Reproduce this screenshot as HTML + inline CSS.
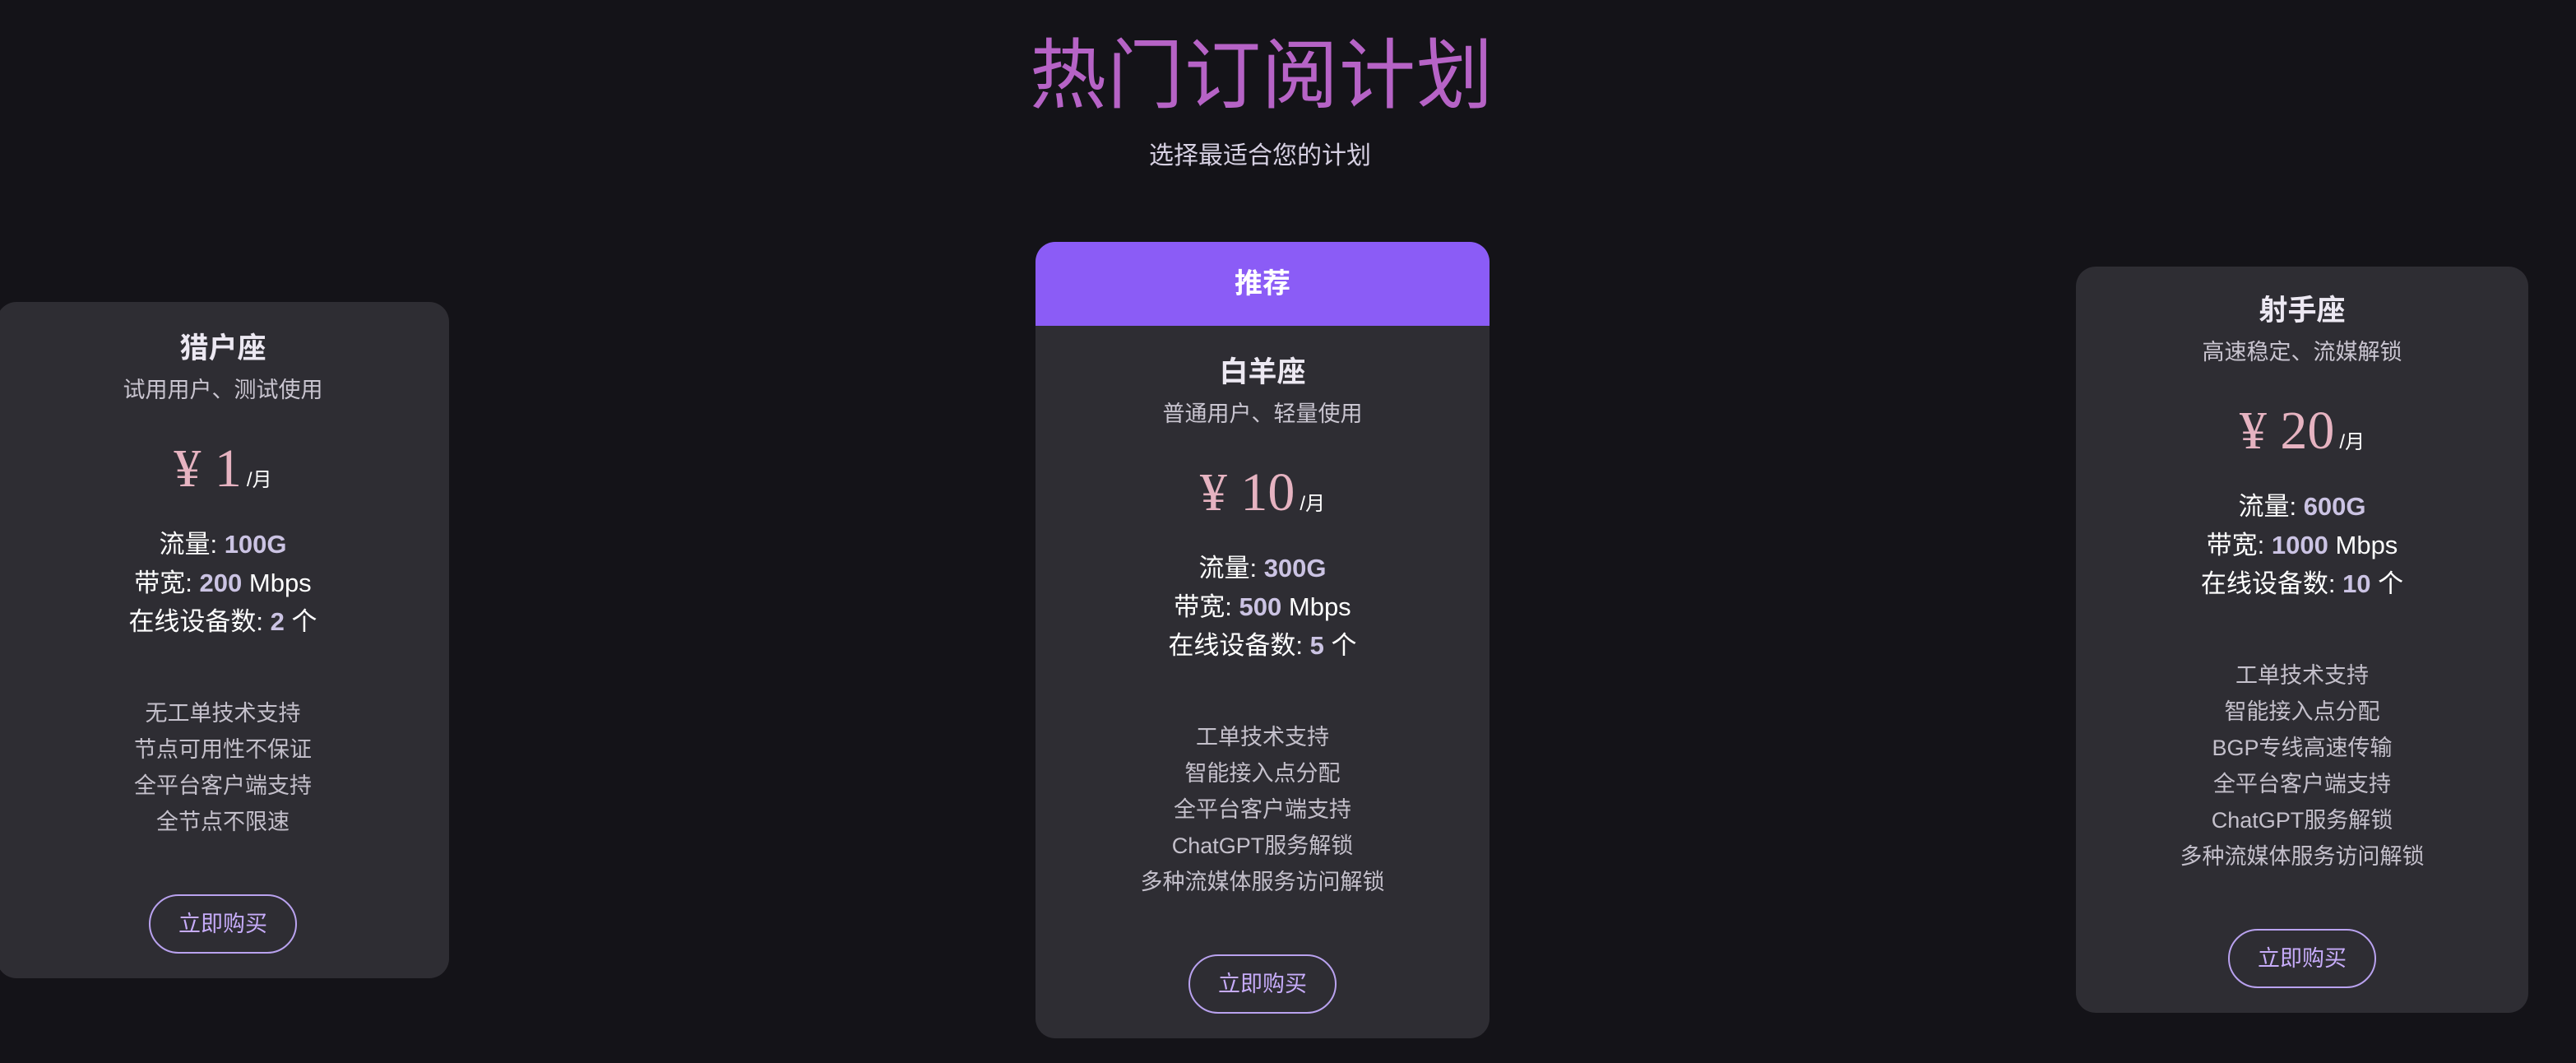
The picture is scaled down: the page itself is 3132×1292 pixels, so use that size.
<!DOCTYPE html>
<html><head><meta charset="utf-8"><style>
*{margin:0;padding:0;box-sizing:border-box}
body{width:3132px;height:1292px;background:#141318;font-family:"Liberation Sans","Noto Sans CJK SC",sans-serif;position:relative;overflow:hidden;color:#fff}
.title{position:absolute;top:32px;left:-32px;width:3132px;text-align:center;font-size:93px;line-height:120px;color:#b663c6;letter-spacing:1px}
.subt{position:absolute;top:170px;left:-34px;width:3132px;text-align:center;font-size:30px;line-height:40px;color:#d6d0e2}
.card{position:absolute;width:550px;background:#2e2d33;border-radius:24px;text-align:center;overflow:hidden}
.body{padding:32px 0 30px}
.hdr{height:102px;background:#8b5cf6;font-size:34px;font-weight:bold;line-height:102px;color:#fff}
.name{font-size:35px;font-weight:bold;line-height:50px;color:#ece8f2}
.sub{margin-top:5px;font-size:27px;line-height:40px;color:#c9c5d0}
.price{margin-top:36px;line-height:80px;height:80px;color:#e6b3c1;font-family:"Liberation Serif","Noto Serif CJK SC",serif;font-size:66px}
.price small{font-family:"Liberation Sans","Noto Sans CJK SC",sans-serif;font-size:24px;color:#fff;margin-left:6px}
.stats{margin-top:28px;font-size:31px;line-height:47px;color:#fff}
.stats b{color:#cbc3e3}
.feat{margin-top:66px;font-size:27px;line-height:44px;color:#c4c0cb}
.btn{margin:66px auto 0;width:180px;height:72px;border:2px solid #b9a2ef;border-radius:36px;font-size:27px;line-height:68px;color:#c7acfa}
</style></head><body>
<div class="title">热门订阅计划</div>
<div class="subt">选择最适合您的计划</div>

<div class="card" style="left:-4px;top:367px">
<div class="body">
<div class="name">猎户座</div>
<div class="sub">试用用户、测试使用</div>
<div class="price">¥ 1<small>/月</small></div>
<div class="stats">流量: <b>100G</b><br>带宽: <b>200</b> Mbps<br>在线设备数: <b>2</b> 个</div>
<div class="feat">无工单技术支持<br>节点可用性不保证<br>全平台客户端支持<br>全节点不限速</div>
<div class="btn">立即购买</div>
</div></div>

<div class="card" style="left:1259px;top:294px;width:552px">
<div class="hdr">推荐</div>
<div class="body">
<div class="name">白羊座</div>
<div class="sub">普通用户、轻量使用</div>
<div class="price">¥ 10<small>/月</small></div>
<div class="stats">流量: <b>300G</b><br>带宽: <b>500</b> Mbps<br>在线设备数: <b>5</b> 个</div>
<div class="feat">工单技术支持<br>智能接入点分配<br>全平台客户端支持<br>ChatGPT服务解锁<br>多种流媒体服务访问解锁</div>
<div class="btn">立即购买</div>
</div></div>

<div class="card" style="left:2524px;top:324px">
<div class="body" style="padding-top:29px">
<div class="name">射手座</div>
<div class="sub">高速稳定、流媒解锁</div>
<div class="price">¥ 20<small>/月</small></div>
<div class="stats">流量: <b>600G</b><br>带宽: <b>1000</b> Mbps<br>在线设备数: <b>10</b> 个</div>
<div class="feat">工单技术支持<br>智能接入点分配<br>BGP专线高速传输<br>全平台客户端支持<br>ChatGPT服务解锁<br>多种流媒体服务访问解锁</div>
<div class="btn">立即购买</div>
</div></div>
</body></html>
